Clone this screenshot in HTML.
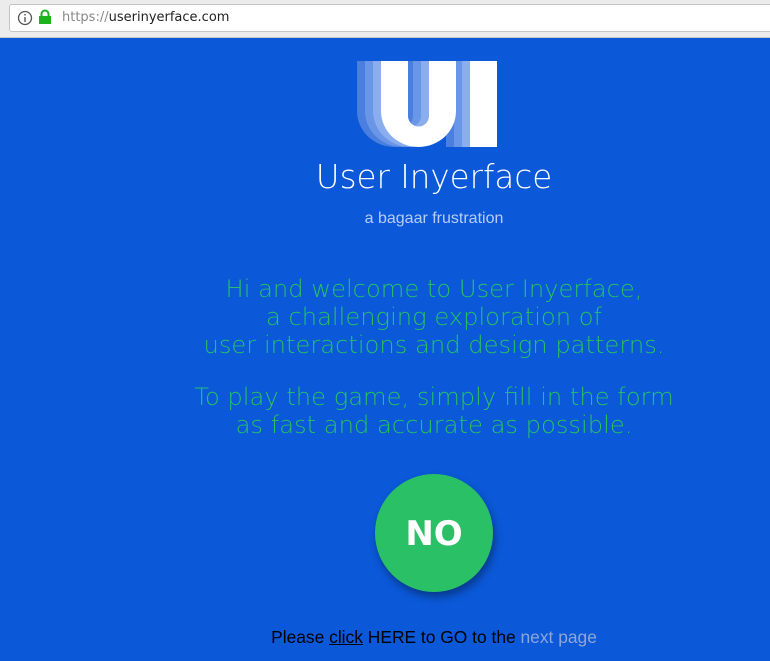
<!DOCTYPE html>
<html><head><style>
body{margin:0;width:770px;height:661px;overflow:hidden;background:#0b58d8;font-family:"Liberation Sans",sans-serif;position:relative}
.bar{position:absolute;left:0;top:0;width:770px;height:37px;background:#ececec;border-bottom:1px solid #c8c8c8}
.url{position:absolute;left:9px;top:4px;width:780px;height:26px;background:#fff;border:1px solid #c4c4c4;border-radius:3px}
.url span{position:absolute;left:52px;top:5px;font-size:13px;font-family:"DejaVu Sans",sans-serif;color:#222}
.t{position:absolute;left:0;width:868px;text-align:center}
.g{font-family:"DejaVu Sans",sans-serif;font-weight:200;color:#27c164;font-size:24.2px;line-height:28px}
.no{position:absolute;left:375px;top:474px;width:118px;height:118px;border-radius:50%;background:#2ac166;box-shadow:2px 5px 8px rgba(0,0,0,.35);color:#fff;font:bold 34px "DejaVu Sans",sans-serif;text-align:center;line-height:120px}
</style></head><body>
<div class="bar"><div class="url">
<svg style="position:absolute;left:7px;top:5px" width="16" height="16"><circle cx="8" cy="8" r="6.5" fill="none" stroke="#555" stroke-width="1.3"/><rect x="7.3" y="7" width="1.4" height="5" fill="#555"/><rect x="7.3" y="4" width="1.4" height="1.5" fill="#555"/></svg>
<svg style="position:absolute;left:28px;top:4px" width="14" height="16"><path d="M3.5 7V5a3.5 3.5 0 0 1 7 0v2" fill="none" stroke="#1cb31c" stroke-width="2"/><rect x="1" y="7" width="12" height="8" fill="#1cb31c"/></svg>
<span><span style="position:static;color:#888">https://</span>userinyerface.com</span></div></div>
<svg style="position:absolute;left:0;top:0" width="770" height="200">
<g fill="#4a7fe0"><path d="M357 61h27v55a10.5 10.5 0 0 0 21 0v-55h27v50a37.5 36 0 0 1 -75 0z"/><rect x="446" y="61" width="27" height="86"/></g>
<g fill="#6a96e8"><path d="M365 61h27v55a10.5 10.5 0 0 0 21 0v-55h27v50a37.5 36 0 0 1 -75 0z"/><rect x="454" y="61" width="27" height="86"/></g>
<g fill="#8aaded"><path d="M373 61h27v55a10.5 10.5 0 0 0 21 0v-55h27v50a37.5 36 0 0 1 -75 0z"/><rect x="462" y="61" width="27" height="86"/></g>
<g fill="#fff"><path d="M381 61h27v55a10.5 10.5 0 0 0 21 0v-55h27v50a37.5 36 0 0 1 -75 0z"/><rect x="470" y="61" width="27" height="86"/></g>
</svg>
<div class="t" style="top:158px;color:#fff;font-size:32.5px;font-family:'DejaVu Sans',sans-serif;font-weight:200">User Inyerface</div>
<div class="t" style="top:210px;color:#b8cdf5;font-size:16px">a bagaar frustration</div>
<div class="t g" style="top:275px">Hi and welcome to User Inyerface,<br>a challenging exploration of<br>user interactions and design patterns.</div>
<div class="t g" style="top:383px">To play the game, simply fill in the form<br>as fast and accurate as possible.</div>
<div class="no">NO</div>
<div class="t" style="top:627px;font-size:17.4px;color:#000">Please <u>click</u> HERE to GO to the <span style="color:#8fa6d8">next page</span></div>
</body></html>
